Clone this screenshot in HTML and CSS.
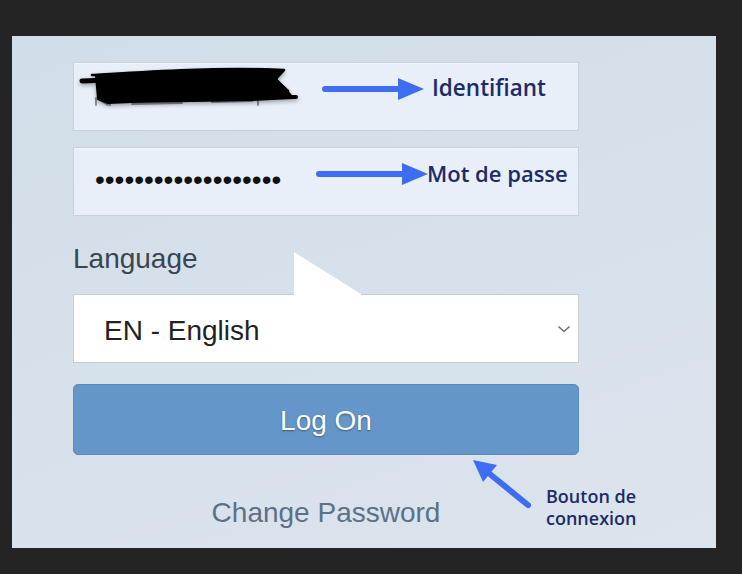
FILE: index.html
```html
<!DOCTYPE html>
<html lang="fr">
<head>
<meta charset="utf-8">
<title>Log On</title>
<link rel="stylesheet" href="styles.css">
</head>
<body>
<div class="panel">
  <div class="form">
    <div class="field"></div>
    <div class="field"><span class="dots">•••••••••••••••••••</span></div>
    <div class="label">Language</div>
    <div class="select">
      <span class="select-text">EN - English</span>
      <svg class="chev" width="14" height="8" viewBox="0 0 14 8"><path d="M1.5 1.5 L7 6.5 L12.5 1.5" fill="none" stroke="#6b6f75" stroke-width="1.5"/></svg>
    </div>
    <div class="button">Log On</div>
    <div class="change">Change Password</div>
  </div>

  <svg class="overlay" width="704" height="512" viewBox="0 0 704 512">
    <polygon points="282,216 349,258 349,260 282,260" fill="#ffffff"/>
    <g stroke="#8a8e95" stroke-width="2" fill="none" stroke-linecap="round">
      <path d="M84,62 L84,69"/>
      <path d="M86,63 L96,69 M98,63 L98,69"/>
      <path d="M120,68 L170,67"/>
      <path d="M200,66 L240,65"/>
      <path d="M246,62 L246,69"/>
    </g>
    <g class="scribble">
      <path d="M84,40 C120,37 180,35 230,33 L271,35 L264,43 L276,56 L281,62 L240,64 L120,66 L96,67 L86,63 Z" fill="#000000" stroke="#000" stroke-width="2" stroke-linejoin="round"/>
      <path d="M70,45 L96,44" fill="none" stroke="#000" stroke-width="5" stroke-linecap="round"/>
      <path d="M80,39 C130,36 200,31 272,34 L263,43 L276,55" fill="none" stroke="#000" stroke-width="2.5" stroke-linecap="round" stroke-linejoin="round"/>
      <path d="M88,61 L284,61" fill="none" stroke="#000" stroke-width="4" stroke-linecap="round"/>
    </g>
    <g fill="#3f6df2" stroke="#3f6df2" stroke-linecap="round">
      <line x1="313" y1="53" x2="390" y2="53" stroke-width="6"/>
      <polygon points="386,42 412,53 386,64" stroke="none"/>
      <line x1="307" y1="138" x2="394" y2="138" stroke-width="6"/>
      <polygon points="390,127 416,138 390,149" stroke="none"/>
      <line x1="516" y1="469" x2="479" y2="439" stroke-width="6"/>
      <polygon points="461,424 485,429 471,446" stroke="none"/>
    </g>
  </svg>

  <span class="note note-id">Identifiant</span>
  <span class="note note-pw">Mot de passe</span>
  <span class="note note-btn">Bouton de<br>connexion</span>
</div>
</body>
</html>
```
FILE: styles.css
```css
html, body {
  margin: 0;
  padding: 0;
}
body {
  background: #242424;
  width: 742px;
  height: 574px;
  overflow: hidden;
  font-family: "Liberation Sans", Arial, sans-serif;
}
.panel {
  position: relative;
  box-sizing: border-box;
  width: 704px;
  height: 512px;
  margin: 36px 0 0 12px;
  padding: 26px 0 0 61px;
  background: linear-gradient(160deg, #d1dde8 0%, #d7e1eb 50%, #dce4ed 100%);
}
.form {
  width: 506px;
  display: flex;
  flex-direction: column;
}
.field {
  box-sizing: border-box;
  height: 69px;
  background: #e8eff9;
  border: 1px solid #c8d0da;
  box-shadow: inset 0 1px 0 #f3f6fb;
  display: flex;
  align-items: center;
  padding-left: 21px;
}
.field + .field {
  margin-top: 16px;
}
.dots {
  font-size: 28px;
  line-height: 32px;
  color: #111;
  padding-bottom: 4px;
}
.label {
  margin-top: 27px;
  height: 32px;
  line-height: 32px;
  font-size: 28px;
  color: #3b4450;
  margin-bottom: 19px;
}
.select {
  box-sizing: border-box;
  height: 69px;
  background: #ffffff;
  border: 1px solid #c9cdd2;
  display: flex;
  align-items: center;
  justify-content: space-between;
  padding: 0 7px 0 30px;
}
.select-text {
  font-size: 28px;
  line-height: 32px;
  color: #222;
  padding-top: 4px;
}
.chev {
  display: block;
}
.button {
  box-sizing: border-box;
  margin-top: 21px;
  height: 71px;
  background: #6496c9;
  border: 1px solid #5b89bc;
  border-radius: 5px;
  color: #ffffff;
  font-size: 28px;
  display: flex;
  align-items: center;
  justify-content: center;
  padding-top: 2px;
  text-shadow: 0 1px 2px rgba(0, 0, 0, 0.4);
}
.change {
  margin-top: 42px;
  text-align: center;
  font-size: 28px;
  line-height: 32px;
  color: #5d7186;
}
.overlay {
  position: absolute;
  left: 0;
  top: 0;
  z-index: 2;
}
.scribble {
  filter: drop-shadow(0 2px 2px rgba(0, 0, 0, 0.35));
}
.note {
  position: absolute;
  z-index: 3;
  font-family: "Open Sans", "DejaVu Sans", sans-serif;
  font-weight: 600;
  color: #1d2b68;
  white-space: nowrap;
}
.note-id {
  left: 420px;
  top: 41px;
  font-size: 22.5px;
  line-height: 22px;
}
.note-pw {
  left: 415px;
  top: 126px;
  font-size: 22px;
  line-height: 22px;
}
.note-btn {
  left: 534px;
  top: 449px;
  font-size: 18px;
  line-height: 22px;
}
```
